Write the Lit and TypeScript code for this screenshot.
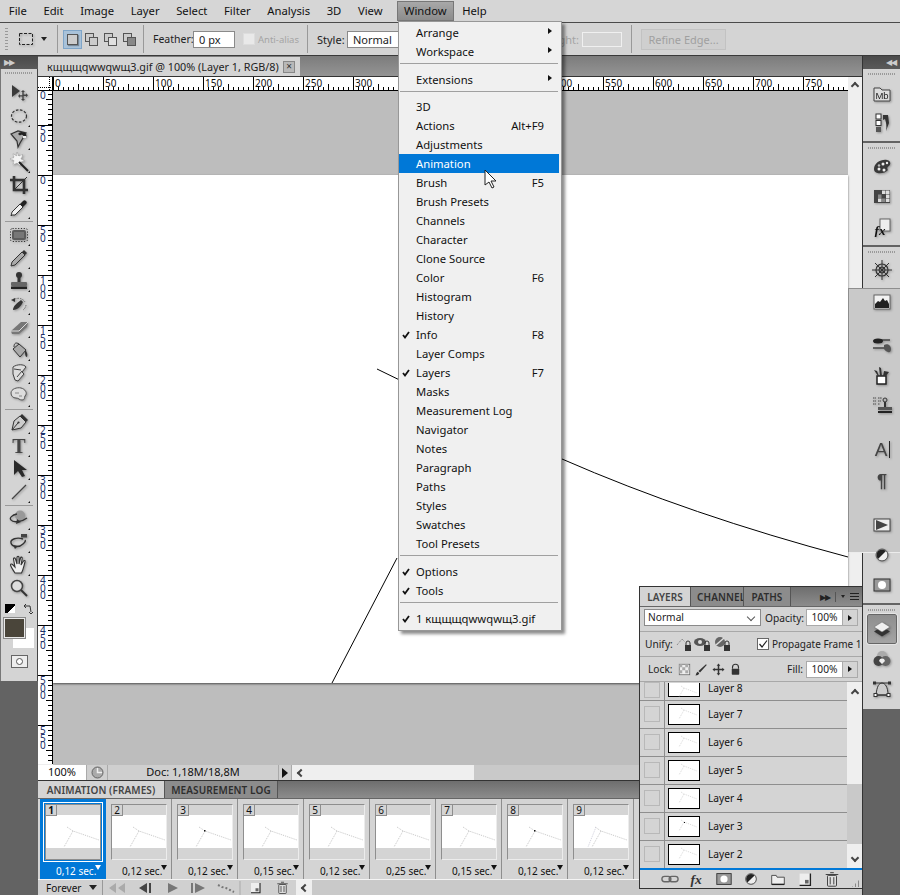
import { LitElement, html, css, svg } from "lit";
import { customElement } from "lit/decorators.js";

const ICONS: Record<string, unknown> = {
  move: svg`<path d="M3 2v12l8-6z" fill="#3a3a3a"/><path d="M14 7l2 2h-1.300v2.600H17v-1.300l2 2-2 2v-1.300h-2.300V16H16l-2 2-2-2h1.300v-2.400H11v1.300l-2-2 2-2v1.300h2.300V9H12z" fill="#444"/>`,
  marquee: svg`<ellipse cx="10" cy="10" rx="7.500" ry="6.200" fill="none" stroke="#333" stroke-width="1.200" stroke-dasharray="2.600 1.500"/>`,
  lasso: svg`<path d="M2 5l7-3 8 2-6 10-2 4-1-6z" fill="#aaa" stroke="#333" stroke-width="1.200"/><path d="M9 5a4 3 0 0 1 8 3l-2.500-.5a2 2 0 0 0-3.500-1z" fill="#222"/><rect x="14" y="7" width="3" height="2" fill="#eee"/>`,
  wand: svg`<path d="M8 0l1.500 4L14 2.500 12 7l4 2-4.500 1-.5 4-3-3-4 2 1-4.500L1 7l4-1.500L4 1.500 7.500 4z" fill="#f4f4f4" stroke="#999" stroke-width=".7" stroke-dasharray="1 .6"/><path d="M10 10l9 9" stroke="#222" stroke-width="2"/>`,
  crop: svg`<path d="M5 1v14h14" fill="none" stroke="#333" stroke-width="2.600"/><path d="M1 5h14v14" fill="none" stroke="#333" stroke-width="2.600"/><path d="M5 15 18 2" stroke="#333"/>`,
  dropper: svg`<path d="M3 17l-1 1 1-4 8-8 3 3-8 8z" fill="#f0f0f0" stroke="#333"/><path d="M11 6l3-3a2 2 0 0 1 3 3l-3 3z" fill="#222"/>`,
  heal: svg`<rect x="3" y="5" width="14" height="10" rx="2" fill="#5c5c5c"/><rect x="5" y="7" width="10" height="6" fill="#777"/><rect x="1.500" y="3.500" width="17" height="13" rx="2" fill="none" stroke="#333" stroke-dasharray="1.200 1.600"/>`,
  brush: svg`<path d="M3 14 13 4l3 3L6 17l-4 1z" fill="#aaa" stroke="#333"/><path d="M13 4l2-2 3 3-2 2z" fill="#333"/>`,
  stamp: svg`<circle cx="10" cy="4" r="3" fill="#333"/><rect x="8.500" y="6" width="3" height="6" fill="#333"/><rect x="2" y="11" width="16" height="4" rx="1" fill="#666"/><rect x="2" y="15.500" width="16" height="2.500" fill="#222"/>`,
  histbrush: svg`<path d="M4 16c0-4 4-7 8-10l2 2c-2 4-5 8-10 8z" fill="#333"/><path d="M6 5a8 8 0 0 1 10 3M17 11a7 7 0 0 1-3 5" fill="none" stroke="#666" stroke-dasharray="1.500 1"/><path d="M2 6l4-2v4z" fill="#333"/>`,
  eraser: svg`<path d="M2 14 12 5h7l-1 5-8 7H3z" fill="#777"/><path d="M2 14h8l9-9" fill="none" stroke="#ddd"/>`,
  bucket: svg`<path d="M4 9l6-5 7 6-6 7z" fill="#aaa" stroke="#333"/><path d="M10 4C7 2 5 3 5 7" fill="none" stroke="#333"/><path d="M16 10c2 2 3 4 2 7-2 0-2-3-2-7z" fill="#333"/>`,
  dodge: svg`<path d="M4 4c4-3 11-3 13 0l-4 5 2 2-6 7-3-1-2-6z" fill="#ddd" stroke="#444"/><path d="M13 8l-5 6M5 6l7 1" stroke="#444" fill="none"/>`,
  sponge: svg`<path d="M2 7c0-4 6-6 10-5s7 5 4 8c-1 2 0 4-3 4s-3-2-6-2-5-2-5-5z" fill="#ddd" stroke="#555"/><path d="M6 7h4M10 10h3" stroke="#888"/>`,
  pen: svg`<path d="M3 17 5 8l6-5 6 6-5 6z" fill="#ccc" stroke="#333"/><path d="M3 17l6-7" stroke="#333"/><circle cx="9.500" cy="9.500" r="1.100" fill="#333"/><path d="M11 3l2-2 6 6-2 2z" fill="#333"/>`,
  T: svg`<text x="10" y="17" text-anchor="middle" font-family="Liberation Serif" font-weight="700" font-size="20" fill="#444">T</text>`,
  pathsel: svg`<path d="M5 1v15l4-4 4 6 3-1-3-6h5z" fill="#2a2a2a"/>`,
  line: svg`<path d="M3 17 17 3" stroke="#444" stroke-width="1.200"/>`,
  rotate3d: svg`<circle cx="11" cy="6.500" r="5" fill="#999"/><path d="M8 5c-5 1-8 4-6 6 2 3 11 2 16-2" fill="none" stroke="#333" stroke-width="1.300"/><path d="M8 10l4 3-5 2z" fill="#333"/>`,
  orbit: svg`<path d="M14 7C8 5 1 7 2 11c1 4 8 5 12 1 2-2 3-3 2-4" fill="none" stroke="#333" stroke-width="1.400"/><path d="M4 13l5 1-3 3z" fill="#333"/><rect x="12" y="2" width="6" height="3.500" fill="#444"/>`,
  hand: svg`<path d="M6 18C4 15 2 12 1.500 10c0-1 1-1.500 2-.5L6 12 4.500 4c0-1.500 1.500-1.500 2 0L8 9V2.500c0-1.500 2-1.500 2 0V9l1.500-6c.5-1.500 2-1 1.700.5L12 10l2.500-4c1-1 2-.5 1.500 1-1 3-1.500 7-3.500 11z" fill="#eee" stroke="#333" stroke-width="1.100"/>`,
  zoom: svg`<circle cx="8" cy="8" r="5.500" fill="#ddd" stroke="#444" stroke-width="1.500"/><path d="M12 12l6 6" stroke="#333" stroke-width="2"/>`,
  mb: svg`<path d="M2 4h6l2 2h8v11H2z" fill="#ddd" stroke="#444"/><text x="10" y="15" text-anchor="middle" font-family="Liberation Sans" font-size="9.500" fill="#222">Mb</text>`,
  histdock: svg`<rect x="4" y="1" width="5" height="5" fill="#fff" stroke="#333"/><rect x="4" y="7.500" width="5" height="5" fill="#fff" stroke="#333"/><rect x="4" y="14" width="5" height="5" fill="#555"/><path d="M11 2h5l1 8-3 8c1-5 0-9-1-12l-2 1z" fill="#333"/>`,
  palette: svg`<path d="M2 12C2 6 9 2 15 3c4 1 4 4 2 6-2 1-2 3-1 4-3 4-14 5-14-1z" fill="#3a3a3a"/><circle cx="7" cy="12" r="1.500" fill="#eee"/><circle cx="11" cy="7" r="1.500" fill="#eee"/><circle cx="15" cy="6" r="1.200" fill="#eee"/><circle cx="7" cy="8.500" r="1.200" fill="#bbb"/><circle cx="12" cy="13" r="1.500" fill="#eee"/>`,
  swatches: svg`<rect x="2" y="3" width="16" height="13" fill="#444"/><path d="M10 3.500h3.500V7H10zM14 3.500h3.500V7H14zM14 7.500h3.500V11H14zM6 11.500h3.500V15H6zM14 11.500h3.500V15H14z" fill="#ddd"/><path d="M6 7.500h3.500V11H6zM10 11.500h3.500V15H10z" fill="#888"/>`,
  styles: svg`<rect x="8" y="2" width="10" height="12" fill="#eee" stroke="#666"/><text x="8" y="18" text-anchor="middle" font-family="Liberation Serif" font-style="italic" font-weight="700" font-size="13" fill="#111">fx</text>`,
  nav: svg`<circle cx="10" cy="10" r="6" fill="none" stroke="#333" stroke-width="1.200"/><circle cx="10" cy="10" r="3" fill="none" stroke="#333"/><path d="M10 0v20M0 10h20M3 3l14 14M17 3 3 17" stroke="#333"/>`,
  histogram: svg`<rect x="2" y="3" width="16" height="14" fill="#f2f2f2" stroke="#666"/><path d="M3 16V12l3-3 2 1 3-4 2 3 2-1 2 4v4z" fill="#222"/>`,
  adjust: svg`<path d="M6 4h12" stroke="#444" stroke-width="1.500"/><ellipse cx="6" cy="5" rx="5" ry="2.500" fill="#222"/><path d="M1 12h11" stroke="#444" stroke-width="1.500"/><path d="M12 9c3-2 7 0 7 4 0 2-1 4-3 3-3-1-3-2-4-3z" fill="#555"/>`,
  cup: svg`<rect x="5" y="11" width="9" height="8" fill="#fff" stroke="#222" stroke-width="1.500"/><path d="M8 11 7 2l2 1 1 8zM6 11 2 5l3 1 2 5zM11 11l1-5 5 1-3 4z" fill="#333"/>`,
  clone: svg`<path d="M1 3h3M1 6h3M1 9h3M6 3h4M6 6h3M6 9h2" stroke="#444" stroke-dasharray="1.500 .6"/><circle cx="13" cy="5" r="2" fill="none" stroke="#333"/><rect x="12" y="7" width="2" height="5" fill="#333"/><rect x="6" y="12" width="14" height="3" fill="#555"/><rect x="6" y="16" width="14" height="2" fill="#222"/>`,
  typeA: svg`<text x="9" y="17" text-anchor="middle" font-family="Liberation Sans" font-size="19" fill="#444">A</text><path d="M17.500 2v17" stroke="#222"/>`,
  para: svg`<text x="10" y="17" text-anchor="middle" font-family="Liberation Sans" font-weight="700" font-size="18" fill="#444">¶</text>`,
  play: svg`<rect x="2" y="4" width="16" height="12" fill="#eee" stroke="#444"/><path d="M4 5l12 5-12 5z" fill="#444"/>`,
  half: svg`<circle cx="10" cy="10" r="5.500" fill="#222"/><path d="M14 6a5.500 5.500 0 0 1-8 8z" fill="#eee"/><circle cx="10" cy="10" r="6" fill="none" stroke="#555"/>`,
  mask: svg`<rect x="2" y="4" width="16" height="12" fill="#999" stroke="#333"/><circle cx="10" cy="10" r="4" fill="#fff"/>`,
  layers: svg`<path d="M2 12.500l8-5 8 5-8 5z" fill="#333"/><path d="M2 8l8-5 8 5-8 5z" fill="#f0f0f0" stroke="#666" stroke-width=".5"/>`,
  channels: svg`<circle cx="10" cy="7" r="5" fill="#aaa"/><circle cx="6.500" cy="12" r="5" fill="#444"/><circle cx="13.500" cy="12" r="5" fill="#666"/><path d="M8 10a5 5 0 0 1 4 0l1 2-3 3-3-3z" fill="#eee"/>`,
  paths: svg`<path d="M4 16C5 7 7 4 10 4s6 4 6 12z" fill="#ccc" stroke="#333"/><path d="M4 16h12M3 4h14" stroke="#333"/><rect x="2" y="14.500" width="3" height="3" fill="#fff" stroke="#333"/><rect x="15" y="14.500" width="3" height="3" fill="#fff" stroke="#333"/><rect x="1" y="2.500" width="3" height="3" fill="#333"/><rect x="16" y="2.500" width="3" height="3" fill="#333"/>`,
  trash: svg`<rect x="5" y="6" width="10" height="12" rx="1" fill="#ddd" stroke="#333"/><path d="M3 5h14M8 3h4M8 8v8M12 8v8" stroke="#333"/>`,
  newdoc: svg`<rect x="4" y="4" width="12" height="13" fill="#eee"/><path d="M4 17h12V4" fill="none" stroke="#222" stroke-width="1.500"/><rect x="10" y="11" width="4" height="4" fill="#666"/>`,
  folder: svg`<path d="M3 6h5l1 2h8v8H3z" fill="#eee" stroke="#444"/><path d="M3 16h14" stroke="#222" stroke-width="1.500"/>`,
  link: svg`<rect x="1" y="7" width="10" height="6" rx="3" fill="none" stroke="#666" stroke-width="1.500"/><rect x="9" y="7" width="10" height="6" rx="3" fill="none" stroke="#666" stroke-width="1.500"/>`,
  fx: svg`<text x="9" y="15" text-anchor="middle" font-family="Liberation Serif" font-style="italic" font-weight="700" font-size="15" fill="#333">fx</text>`,
  checker: svg`<rect x="3" y="3" width="14" height="14" fill="#eee" stroke="#666"/><path d="M3 3h4v4H3zM11 3h4v4h-4zM7 7h4v4H7zM15 7h2v4h-2zM3 11h4v4H3zM11 11h4v4h-4z" fill="#aaa"/>`,
  paint: svg`<path d="M2 18c3 0 4-1 5-3l-2-2c-2 1-2 3-3 5zM6 12l10-9 1 1-9 10z" fill="#333"/>`,
  arrows: svg`<path d="M10 2l2.500 3H11v4h4V7.500l3 2.500-3 2.500V11h-4v4h1.500L10 18l-2.500-3H9v-4H5v1.500L2 10l3-2.500V9h4V5H7.500z" fill="#333"/>`,
  lock: svg`<path d="M6 9V7a4 4 0 0 1 8 0v2" fill="none" stroke="#333" stroke-width="1.500"/><rect x="5" y="9" width="10" height="8" rx="1" fill="#333"/>`,
};

const ic = (name: string, size = 20) =>
  html`<svg class="ic" viewBox="0 0 20 20" width=${size} height=${size}>${ICONS[name]}</svg>`;

const MENUBAR = ["File", "Edit", "Image", "Layer", "Select", "Filter", "Analysis", "3D", "View", "Window", "Help"];

type MenuRow = { t?: string; k?: string; sub?: boolean; on?: boolean; hi?: boolean; sep?: number };
const WINDOW_MENU: MenuRow[] = [
  { t: "Arrange", sub: true },
  { t: "Workspace", sub: true },
  { sep: 9 },
  { t: "Extensions", sub: true },
  { sep: 8 },
  { t: "3D" },
  { t: "Actions", k: "Alt+F9" },
  { t: "Adjustments" },
  { t: "Animation", hi: true },
  { t: "Brush", k: "F5" },
  { t: "Brush Presets" },
  { t: "Channels" },
  { t: "Character" },
  { t: "Clone Source" },
  { t: "Color", k: "F6" },
  { t: "Histogram" },
  { t: "History" },
  { t: "Info", k: "F8", on: true },
  { t: "Layer Comps" },
  { t: "Layers", k: "F7", on: true },
  { t: "Masks" },
  { t: "Measurement Log" },
  { t: "Navigator" },
  { t: "Notes" },
  { t: "Paragraph" },
  { t: "Paths" },
  { t: "Styles" },
  { t: "Swatches" },
  { t: "Tool Presets" },
  { sep: 9 },
  { t: "Options", on: true },
  { t: "Tools", on: true },
  { sep: 9 },
  { t: "1 кщщщqwwqwщ3.gif", on: true },
];

// null = separator between tool groups
const TOOLS: (string | null)[] = [
  "move", "marquee", "lasso", "wand", "crop", "dropper", null,
  "heal", "brush", "stamp", "histbrush", "eraser", "bucket", "dodge", "sponge", null,
  "pen", "T", "pathsel", "line", null,
  "rotate3d", "orbit", "hand", "zoom",
];
const NO_FLYOUT = ["move", "crop", "zoom"];

// icons, group height, row pitch, space above the first row
const DOCK: [string[], number, number, number][] = [
  [["mb", "histdock"], 72, 29, 4],
  [["palette", "swatches", "styles"], 102, 30, 3],
  [["nav", "histogram"], 73, 32, 1],
  [["adjust", "cup", "clone"], 102, 29.5, 3],
  [["typeA", "para"], 73, 31, 1],
  [["play", "half", "mask"], 102, 30, 3],
  [["layers", "channels", "paths"], 104, 30, 3],
];

const V_LABELS = ["0", "50", "0", "50", "100", "150", "200", "250", "300", "350", "400", "450", "500", "550"];
const FRAMES = ["0,12", "0,12", "0,12", "0,15", "0,12", "0,25", "0,15", "0,12", "0,12", "0,12"];
const LAYERS = [8, 7, 6, 5, 4, 3, 2];

@customElement("app-root")
export class AppRoot extends LitElement {
  static styles = css`
    :host {
      display: block;
      width: 900px;
      height: 895px;
      font-family: "Noto Sans", sans-serif;
      font-size: 11px;
      color: #111;
    }
    * { box-sizing: border-box; }
    .app {
      position: relative;
      width: 900px;
      height: 895px;
      overflow: hidden;
      background: #636363;
      display: flex;
      flex-direction: column;
    }
    .ic { display: block; flex: none; }
    .shadow { filter: drop-shadow(1px 1px 1px rgba(0,0,0,.3)); }

    /* menu bar */
    .menubar {
      height: 22px;
      background: #d6d6d6;
      display: flex;
      align-items: center;
      padding-left: 0.5px;
      font-size: 11.25px;
      flex: none;
    }
    .menubar span { padding: 0 8.3px; height: 20px; line-height: 20px; }
    .menubar span.open {
      background: linear-gradient(#a8a8a8, #8c8c8c);
      border: 1px solid #777;
      line-height: 18px;
      padding: 0;
      margin-left: 6px;
      width: 57px;
      text-align: center;
    }

    /* options bar */
    .options {
      height: 34px;
      flex: none;
      background: #d4d4d4;
      border-top: 1px solid #4a4a4a;
      border-bottom: 1px solid #3a3a3a;
      display: flex;
      align-items: center;
      padding-left: 5px;
      color: #222;
    }
    .grip-v {
      width: 3px;
      height: 22px;
      background: repeating-linear-gradient(#999 0 1px, transparent 1px 3px);
      margin-right: 10px;
    }
    .vsep { width: 1px; height: 28px; background: #999; flex: none; }
    .mode { width: 19px; height: 19px; display: flex; align-items: center; justify-content: center; }
    .mode.active { background: #a9c2d9; border: 1px solid #7fa5c8; }
    .mode i { display: block; width: 11px; height: 11px; background: #ccc; border: 1px solid #555; box-shadow: 1px 1px 1px rgba(0,0,0,.3); }
    .mode i.b { box-shadow: -4px -4px 0 -1px #ccc, -4px -4px 0 0 #555; margin: 4px 0 0 4px; width: 9px; height: 9px; }
    .mode i.c { background: #888; }
    .input { background: #fff; border: 1px solid #8a8a8a; height: 17px; line-height: 15px; padding-left: 5px; flex: none; }
    .disabled { color: #a4a4a4; }
    .tri { width: 0; height: 0; border: 3.5px solid transparent; border-top: 4px solid #222; border-bottom: 0; flex: none; }
    .refine {
      width: 85px; height: 21px; margin-left: 9px; line-height: 19px; text-align: center;
      border: 1px solid #c2c2c2; background: #cfcfcf; color: #a0a0a0;
    }
    .lbl { flex: none; white-space: nowrap; }

    .main { flex: 1; display: flex; min-height: 0; }

    /* left tools */
    .toolcol { width: 38px; flex: none; display: flex; flex-direction: column; }
    .colhead {
      height: 13px; flex: none; background: linear-gradient(#4a4a4a, #5a5a5a);
      color: #ccc; font-size: 8px; line-height: 12px; padding: 0 4px; letter-spacing: -1px;
    }
    .tools {
      height: 612px; background: #d4d4d4; border-left: 1px solid #777; border-right: 1px solid #444;
      display: flex; flex-direction: column; align-items: center;
    }
    .grip-h {
      height: 2px; width: 28px; flex: none;
      background: repeating-linear-gradient(90deg, #9a9a9a 0 1px, transparent 1px 2px);
    }
    .tools .grip-h { margin: 3px 0 7px; }
    .tool { position: relative; width: 36px; height: 23px; flex: none; display: flex; align-items: center; justify-content: center; }
    .tool.fly::after {
      content: ""; position: absolute; left: 27px; bottom: 0;
      border: 1.5px solid transparent; border-right-color: #111; border-bottom-color: #111;
    }
    .toolsep { width: 28px; height: 1px; background: #9a9a9a; margin: 2px 0 1px; flex: none; }
    .mini { display: flex; width: 28px; justify-content: space-between; margin-top: 5px; height: 10px; flex: none; }
    .defcol { width: 10px; height: 9px; background: linear-gradient(135deg, #000 0 60%, #fff 60%); }
    .swatches { position: relative; width: 30px; height: 31px; margin-top: 4px; flex: none; }
    .fg, .bg { position: absolute; width: 21px; height: 20px; }
    .fg { left: 0; top: 0; background: #4a453a; border: 1px solid #e8e8e8; outline: 1px solid #888; z-index: 1; }
    .bg { left: 9px; top: 10px; background: #fff; }
    .quick { width: 17px; height: 13px; margin-top: 6px; background: #eee; border: 1px solid #666; display: flex; align-items: center; justify-content: center; flex: none; }
    .quick i { width: 7px; height: 7px; border-radius: 50%; background: #fff; border: 1px solid #555; }

    /* document */
    .doc { flex: 1; min-width: 0; display: flex; flex-direction: column; }
    .tabs { height: 20px; flex: none; background: linear-gradient(#7c7c7c, #949494); display: flex; align-items: flex-end; }
    .doctab {
      width: 262px; height: 19px; background: #d4d4d4; padding-left: 9px;
      display: flex; align-items: center; font-size: 10.8px; color: #222; white-space: nowrap;
    }
    .close { width: 12px; height: 12px; margin-left: auto; margin-right: 5px; background: #b8b8b8; border: 1px solid #888; font-size: 10px; line-height: 9px; text-align: center; color: #333; flex: none; }
    .hrow { height: 15px; flex: none; display: flex; background: #fff; border-top: 1px solid #333; }
    .corner {
      width: 15px; flex: none; border-right: 1px solid #000; border-bottom: 1px solid #000;
      background:
        repeating-linear-gradient(#000 0 1px, transparent 1px 2px) 11px 0 / 1px 100% no-repeat,
        repeating-linear-gradient(90deg, #000 0 1px, transparent 1px 2px) 0 10px / 100% 1px no-repeat;
    }
    .hruler { flex: 1; min-width: 0; display: flex; }
    .hseg {
      width: 50px; flex: none; border-left: 1px solid #000; border-bottom: 1px solid #000;
      font-size: 10px; line-height: 12px; padding-left: 1px; color: #111;
      background:
        linear-gradient(90deg, transparent 24px, #000 24px 25px, transparent 25px) 0 100% / 50px 6px no-repeat,
        repeating-linear-gradient(90deg, transparent 0 4px, #000 4px 5px) 0 100% / 50px 3px no-repeat;
    }
    .hseg:last-child { width: 45px; }
    .hfill { width: 14px; flex: none; background: #efefef; display: flex; justify-content: center; padding-top: 6px; }
    .docbody { flex: 1; min-height: 0; display: flex; }
    .vruler { width: 15px; flex: none; background: #fff; border-right: 1px solid #000; }
    .vseg {
      height: 50px; border-top: 1px solid #000; padding: 1px 0 0 2px;
      font-size: 10px; line-height: 7.5px; color: #1a2f6a; white-space: pre-line;
      background:
        linear-gradient(transparent 24px, #000 24px 25px, transparent 25px) 100% 0 / 6px 50px no-repeat,
        repeating-linear-gradient(transparent 0 4px, #000 4px 5px) 100% 0 / 4px 50px no-repeat;
    }
    .vseg.first { height: 34px; border-top: 0; background-position: 100% -16px; }
    .vseg:last-child { height: 40px; }
    .canvas { position: relative; flex: 1; display: flex; flex-direction: column; background: #bdbdbd; }
    .gray { background: #bdbdbd; flex: none; }
    .page { height: 508px; flex: none; background: #fff; box-shadow: 0 1px 2px rgba(0,0,0,.6); z-index: 0; }
    .strokes { position: absolute; left: 0; top: 0; z-index: 1; }
    .vscroll { width: 14px; flex: none; background: #efefef; display: flex; flex-direction: column; }
    .vscroll .up { height: 197px; flex: none; }
    .vscroll .thumb { height: 265px; flex: none; background: #c9c9c9; }
    .chev { width: 6px; height: 6px; border-left: 2px solid #444; border-top: 2px solid #444; transform: rotate(45deg); display: block; flex: none; }
    .chev.l { transform: rotate(-45deg); }
    .chev.d { transform: rotate(225deg); }

    .status { height: 16px; flex: none; display: flex; background: #cfcfcf; border-top: 1px solid #eee; }
    .zoomval { width: 48px; background: #fff; text-align: center; line-height: 14px; font-size: 11px; }
    .statusicon { width: 22px; display: flex; align-items: center; justify-content: center; border-right: 1px solid #aaa; border-left: 1px solid #aaa; }
    .doctext { width: 170px; text-align: center; line-height: 14px; }
    .playbtn { width: 14px; display: flex; align-items: center; justify-content: center; border-left: 1px solid #aaa; border-right: 1px solid #aaa; }
    .rtri { border: 5px solid transparent; border-left: 6px solid #111; border-right: 0; }
    .rtri.s { border-width: 3px 0 3px 4px; }
    .hscroll { flex: 1; display: flex; min-width: 0; background: #c9c9c9; }
    .hscroll .track { flex: none; background: #efefef; display: flex; align-items: center; padding-left: 6px; }

    /* animation panel */
    .anim { height: 115px; flex: none; display: flex; flex-direction: column; background: #d0d0d0; border-top: 1px solid #333; }
    .animtabs { height: 18px; flex: none; display: flex; background: linear-gradient(#6e6e6e, #8c8c8c); border-bottom: 1px solid #666; }
    .ptab { font-size: 10px; font-weight: 600; letter-spacing: .1px; white-space: nowrap; line-height: 18px; text-align: center; flex: none; }
    .ptab.on { background: #d4d4d4; color: #444; }
    .ptab.off { background: #8c8c8c; color: #2e2e2e; border-right: 1px solid #555; border-left: 1px solid #555; }
    .frames { height: 81px; flex: none; display: flex; padding-left: 2px; border-bottom: 1px solid #f4f4f4; background: #d4d4d4; }
    .frame { width: 66px; flex: none; border-right: 1px solid #8e8e8e; padding: 5px 0 0 5px; position: relative; color: #111; }
    .frame.sel { background: #0078d7; color: #fff; border-right: 0; }
    .thumb {
      position: relative; width: 56px; height: 56px; background: #d4d4d4;
      border: 1px solid; border-color: #8e8e8e #ececec #ececec #8e8e8e;
    }
    .frame.sel .thumb { outline: 1px solid #fff; outline-offset: 1px; border-color: #8e8e8e; }
    .thumb .white { position: absolute; left: 0; right: 0; top: 10px; height: 33px; background: #fff; }
    .thumb svg { position: absolute; left: 0; top: 0; }
    .num {
      position: absolute; left: 0; top: 0; width: 11px; height: 11px; background: #d4d4d4;
      border-right: 1px solid #8e8e8e; border-bottom: 1px solid #8e8e8e;
      font-size: 10px; line-height: 10px; text-align: center; color: #111;
    }
    .frame.sel .num { font-weight: 700; }
    .time { position: absolute; left: 16px; top: 65px; font-size: 10px; line-height: 14px; white-space: nowrap; }
    .dtri { position: absolute; left: 55px; top: 66px; border: 3px solid transparent; border-top: 5px solid currentColor; border-bottom: 0; }
    .ctrls { flex: 1; display: flex; align-items: center; background: #d0d0d0; position: relative; }
    .forever { width: 44px; margin-left: 8px; flex: none; font-size: 10px; }
    .cbtn { display: block; flex: none; }

    /* dock */
    .dock { width: 38px; flex: none; display: flex; flex-direction: column; border-left: 1px solid #333; }
    .dock .colhead { text-align: right; height: 13px; }
    .dockgroup {
      background: #d4d4d4; flex: none; display: flex; flex-direction: column; align-items: center;
      margin-bottom: 2px; padding-top: 4px;
    }
    .dockbtn { width: 30px; display: flex; align-items: center; justify-content: center; flex: none; }
    .dockbtn.active { background: linear-gradient(#8e8e8e, #a4a4a4); border: 1px solid #666; outline: 1px solid #e4e4e4; border-radius: 2px; height: 28px; }

    /* floating window menu */
    .winmenu {
      position: absolute; left: 398px; top: 21px; width: 164px; height: 610px;
      background: #f0f0f0; border: 1px solid #979797; padding-top: 1px; font-size: 11.25px; color: #111;
      box-shadow: 3px 3px 3px rgba(0,0,0,.45); z-index: 5;
    }
    .mi { height: 19px; line-height: 19px; padding-left: 17px; position: relative; white-space: nowrap; width: 160px; }
    .mi.hi { background: #0078d7; color: #fff; }
    .mi .k { position: absolute; right: 15px; top: 0; }
    .mi .sub { position: absolute; left: 149px; top: 5px; border: 3.5px solid transparent; border-left: 4px solid #111; border-right: 0; }
    .mi svg { position: absolute; left: 3px; top: 6px; }
    .ms { position: relative; }
    .ms::after { content: ""; position: absolute; left: 1px; right: 3px; top: 2px; height: 1px; background: #a0a0a0; }

    /* floating layers panel */
    .layers {
      position: absolute; left: 639px; top: 586px; width: 224px; height: 303px;
      background: #d4d4d4; border: 1px solid #333; display: flex; flex-direction: column; z-index: 3;
      font-size: 10.2px;
    }
    .ltabs { height: 20px; flex: none; display: flex; background: linear-gradient(#6e6e6e, #8c8c8c); border-bottom: 1px solid #666; }
    .ltabs .ptab { line-height: 20px; overflow: hidden; }
    .lmenu { margin-left: auto; margin-right: 3px; display: flex; align-items: center; gap: 5px; color: #222; }
    .lmenu .bars { width: 9px; height: 7px; background: repeating-linear-gradient(#222 0 1px, transparent 1px 3px); }
    .lrow { display: flex; align-items: center; padding: 0 4px; flex: none; color: #222; height: 25px; white-space: nowrap; }
    .lrow + .lrow { border-top: 1px solid #a8a8a8; }
    .lrow.blend { height: 24px; padding-bottom: 3px; }
    .lsel {
      width: 117px; height: 17px; background: #fff; border: 1px solid #8a8a8a; padding-left: 3px; line-height: 15px;
      position: relative; flex: none;
    }
    .lsel::after { content: ""; position: absolute; right: 6px; top: 4px; width: 5px; height: 5px; border-right: 1px solid #555; border-bottom: 1px solid #555; transform: rotate(45deg); }
    .stepper { display: flex; flex: none; height: 17px; width: 52px; margin-left: auto; border: 1px solid #aaa; }
    .stepper .v { flex: 1; background: #fff; text-align: center; line-height: 15px; }
    .stepper .b { width: 15px; background: #d4d4d4; border-left: 1px solid #aaa; display: flex; align-items: center; justify-content: center; }
    .chk { width: 12px; height: 12px; background: #fff; border: 1px solid #666; flex: none; display: flex; align-items: center; justify-content: center; }
    .list { flex: 1; min-height: 0; display: flex; border-top: 1px solid #a8a8a8; }
    .rows { flex: 1; min-width: 0; overflow: hidden; background: #d4d4d4; }
    .lyr { height: 28px; display: flex; align-items: center; border-bottom: 1px solid #8e8e8e; }
    .lyr.cut { height: 19px; align-items: flex-end; }
    .lyr .eye { width: 25px; height: 100%; flex: none; border-right: 1px solid #8e8e8e; padding: 5px 4px; }
    .lyr .eye i { display: block; width: 16px; height: 16px; border: 1px solid #b8b8b8; }
    .lyr.cut .eye { padding-top: 0; }
    .lyr .th { width: 32px; height: 21px; margin: 0 0 1px 3px; background: #fff; border: 1px solid #000; flex: none; }
    .lyr.cut .th { height: 14px; margin-bottom: 3px; border-top: 0; }
    .lyr .th svg { display: block; }
    .lyr .nm { margin: 0 0 2px 8px; }
    .lyr.cut .nm { margin-bottom: 5px; }
    .lscroll { width: 15px; flex: none; background: #efefef; display: flex; flex-direction: column; align-items: center; }
    .lfoot { height: 20px; flex: none; display: flex; align-items: center; border-top: 2px solid #0078d7; padding-left: 16px; position: relative; }
    .lfoot span.cell { width: 27px; flex: none; display: flex; justify-content: center; }
    .resize {
      position: absolute; right: 1px; bottom: 1px; width: 9px; height: 9px;
      background: repeating-linear-gradient(90deg, #888 0 1px, transparent 1px 3px);
      clip-path: polygon(100% 0, 100% 100%, 0 100%);
    }
    .cursor { position: absolute; left: 484px; top: 169px; z-index: 6; }
  `;

  renderTools() {
    return TOOLS.map((t) =>
      t === null
        ? html`<div class="toolsep"></div>`
        : html`<div class="tool ${NO_FLYOUT.includes(t) ? "" : "fly"}"><span class="shadow">${ic(t)}</span></div>`,
    );
  }

  renderDock() {
    return DOCK.map(
      ([icons, height, pitch, lead]) => html`<div class="dockgroup" style="height:${height}px">
        <div class="grip-h" style="margin-bottom:${lead}px"></div>
        ${icons.map(
          (n) => html`<div class="dockbtn ${n === "layers" ? "active" : ""}" style="height:${pitch}px">
            <span class="shadow">${ic(n)}</span>
          </div>`,
        )}
      </div>`,
    );
  }

  renderFrame(time: string, i: number) {
    const dot = i === 2 || i === 7;
    return html`<div class="frame ${i === 0 ? "sel" : ""}">
      <div class="thumb">
        <div class="white"></div>
        <svg width="54" height="54" viewBox="0 0 54 54">
          <path d="M21 22l6 4 26 9M27 26l-9 16" fill="none" stroke="#c6c6c6" stroke-dasharray="1 1"/>
          ${dot ? svg`<rect x="26" y="25" width="1.500" height="1.500" fill="#111"/>` : ""}
          ${i === 8 ? svg`<path d="M22 22l-8 20" fill="none" stroke="#d0d0dc" stroke-dasharray="1 1"/>` : ""}
        </svg>
        <div class="num">${i + 1}</div>
      </div>
      <span class="time">${time} sec.</span>
      <span class="dtri"></span>
    </div>`;
  }

  renderLayerRow(n: number, i: number) {
    return html`<div class="lyr ${i === 0 ? "cut" : ""}">
      <div class="eye"><i></i></div>
      <div class="th">
        <svg width="30" height="19" viewBox="0 0 30 19">
          <path d="M12 3l3 2 13 5M15 5l-5 9" fill="none" stroke="#dadada" stroke-dasharray="1 1"/>
          ${n === 3 ? svg`<rect x="15" y="5" width="1" height="1" fill="#111"/>` : ""}
        </svg>
      </div>
      <span class="nm">Layer ${n}</span>
    </div>`;
  }

  renderMenu() {
    return html`<div class="winmenu">
      ${WINDOW_MENU.map((m) =>
        m.sep
          ? html`<div class="ms" style="height:${m.sep}px"></div>`
          : html`<div class="mi ${m.hi ? "hi" : ""}">
              ${m.on
                ? html`<svg width="8" height="8" viewBox="0 0 8 8"><path d="M1 4l2 2.500L7 1" fill="none" stroke="#111" stroke-width="1.800"/></svg>`
                : ""}
              ${m.t}
              ${m.k ? html`<span class="k">${m.k}</span>` : ""}
              ${m.sub ? html`<span class="sub"></span>` : ""}
            </div>`,
      )}
    </div>`;
  }

  renderLayers() {
    return html`<div class="layers">
      <div class="ltabs">
        <div class="ptab on" style="width:50px">LAYERS</div>
        <div class="ptab off" style="width:54px;text-align:left;padding-left:6px">CHANNELS</div>
        <div class="ptab off" style="width:47px;border-left:0">PATHS</div>
        <div class="lmenu">
          <span style="font-size:8px;letter-spacing:-1px">▶▶</span>
          <span style="width:1px;height:10px;background:#555"></span>
          <span class="tri" style="border-width:2px;border-top-width:3px"></span>
          <span class="bars"></span>
        </div>
      </div>
      <div class="lrow blend">
        <div class="lsel">Normal</div>
        <span style="margin-left:4px">Opacity:</span>
        <div class="stepper"><div class="v">100%</div><div class="b"><span class="rtri s"></span></div></div>
      </div>
      <div class="lrow" style="padding-left:5px">
        Unify:
        <span style="margin-left:3px;display:flex;gap:1px">
          <svg width="16" height="16" viewBox="0 0 16 16"><path d="M1 9l5-6 3 3" fill="none" stroke="#777" stroke-dasharray="1 1"/><rect x="9" y="9" width="6" height="6" fill="#333"/><path d="M10 9V7a2 2 0 0 1 4 0v2" fill="none" stroke="#333"/></svg>
          <svg width="20" height="16" viewBox="0 0 20 16"><ellipse cx="7" cy="6" rx="6" ry="4" fill="#555"/><circle cx="7" cy="6" r="2" fill="#ddd"/><rect x="11" y="9" width="6" height="6" fill="#333"/><path d="M12 9V7a2 2 0 0 1 4 0v2" fill="none" stroke="#333"/></svg>
          <svg width="18" height="16" viewBox="0 0 18 16"><circle cx="6" cy="6" r="5" fill="#666"/><path d="M2 9l8-7" stroke="#ddd" stroke-width="1.500"/><rect x="10" y="9" width="6" height="6" fill="#333"/><path d="M11 9V7a2 2 0 0 1 4 0v2" fill="none" stroke="#333"/></svg>
        </span>
        <span class="chk" style="margin-left:auto">
          <svg width="10" height="10" viewBox="0 0 10 10"><path d="M1.500 5l2.500 3L9 1.500" fill="none" stroke="#222" stroke-width="1.200"/></svg>
        </span>
        <span style="margin-left:3px;font-size:10px;width:86px;flex:none">Propagate Frame 1</span>
      </div>
      <div class="lrow" style="padding-left:8px">
        Lock:
        <span style="margin-left:4px;display:flex;gap:2px">${ic("checker", 15)}${ic("paint", 15)}${ic("arrows", 15)}${ic("lock", 15)}</span>
        <span style="margin-left:auto;margin-right:3px">Fill:</span>
        <div class="stepper" style="margin-left:0"><div class="v">100%</div><div class="b"><span class="rtri s"></span></div></div>
      </div>
      <div class="list">
        <div class="rows">${LAYERS.map((n, i) => this.renderLayerRow(n, i))}</div>
        <div class="lscroll">
          <span class="chev" style="margin-top:8px"></span>
          <span style="flex:none;height:88px"></span>
          <span style="flex:none;height:60px;width:15px;background:#c9c9c9"></span>
          <span class="chev d" style="margin-top:11px"></span>
        </div>
      </div>
      <div class="lfoot">
        ${["link", "fx", "mask", "half", "folder", "newdoc", "trash"].map(
          (n) => html`<span class="cell">${ic(n, 18)}</span>`,
        )}
        <span class="resize"></span>
      </div>
    </div>`;
  }

  render() {
    const hlabels = Array.from({ length: 16 }, (_, i) => i * 50);
    return html`<div class="app">
      <div class="menubar">
        ${MENUBAR.map((m) => html`<span class=${m === "Window" ? "open" : ""}>${m}</span>`)}
      </div>

      <div class="options">
        <div class="grip-v"></div>
        <span class="shadow"><svg class="ic" width="16" height="16" viewBox="0 0 16 16"><rect x="1.500" y="2.500" width="13" height="11" fill="none" stroke="#222" stroke-dasharray="3 1.500"/></svg></span>
        <span class="tri" style="margin:0 10px 0 7px"></span>
        <div class="vsep"></div>
        <span class="mode active" style="margin-left:5px"><i></i></span>
        <span class="mode"><i class="b"></i></span>
        <span class="mode"><i class="b" style="background:#e0e0e0"></i></span>
        <span class="mode"><i class="b c"></i></span>
        <div class="vsep" style="margin-left:4px"></div>
        <span class="lbl" style="margin-left:9px;width:40px;font-size:10.5px">Feather:</span>
        <div class="input" style="width:42px">0 px</div>
        <span style="width:12px;height:12px;background:#e9e9e9;border:1px solid #ddd;margin-left:8px;flex:none"></span>
        <span class="lbl disabled" style="margin-left:3px;width:40px;font-size:9.5px">Anti-alias</span>
        <div class="vsep" style="margin-left:9px"></div>
        <span class="lbl" style="margin-left:9px;width:30px">Style:</span>
        <div class="input" style="width:100px">Normal</div>
        <span class="lbl disabled" style="width:132px;text-align:right">Height:</span>
        <div class="input" style="width:40px;margin-left:3px;background:#d4d4d4;border-color:#f0f0f0;height:15px"></div>
        <div class="vsep" style="margin-left:9px"></div>
        <div class="refine">Refine Edge...</div>
      </div>

      <div class="main">
        <aside class="toolcol">
          <div class="colhead">▶▶</div>
          <div class="tools">
            <div class="grip-h"></div>
            ${this.renderTools()}
            <div class="mini"><span class="defcol"></span>
              <svg width="10" height="10" viewBox="0 0 10 10"><path d="M1 2h6l1 6M6 8l2 2 2-2M3 0 1 2l2 2" fill="none" stroke="#333"/></svg>
            </div>
            <div class="swatches"><div class="fg"></div><div class="bg"></div></div>
            <div class="quick"><i></i></div>
          </div>
        </aside>

        <section class="doc">
          <div class="tabs">
            <div class="doctab">кщщщqwwqwщ3.gif @ 100% (Layer 1, RGB/8)<span class="close">×</span></div>
          </div>
          <div class="hrow">
            <div class="corner"></div>
            <div class="hruler">${hlabels.map((n) => html`<div class="hseg">${n}</div>`)}</div>
            <div class="hfill"><span class="chev"></span></div>
          </div>
          <div class="docbody">
            <div class="vruler">
              ${V_LABELS.map(
                (l, i) => html`<div class="vseg ${i === 0 ? "first" : ""}">${l.split("").join("\n")}</div>`,
              )}
            </div>
            <div class="canvas">
              <div class="gray" style="height:84px"></div>
              <div class="page"></div>
              <div class="gray" style="height:82px"></div>
              <svg class="strokes" width="795" height="674" viewBox="53 91 795 674">
                <path d="M377 369 562 459Q690 515 848 557M397 558 332 683" fill="none" stroke="#000"/>
              </svg>
            </div>
            <div class="vscroll">
              <div class="up"></div>
              <div class="thumb"></div>
            </div>
          </div>
          <div class="status">
            <div class="zoomval">100%</div>
            <div class="statusicon">
              <svg width="13" height="13" viewBox="0 0 13 13"><circle cx="6.500" cy="6.500" r="5.500" fill="#aaa" stroke="#666"/><path d="M6.500 2v4.500H11" fill="none" stroke="#f0f0f0" stroke-width="1.500"/></svg>
            </div>
            <div class="doctext">Doc: 1,18M/18,8M</div>
            <div class="playbtn"><span class="rtri"></span></div>
            <div class="hscroll">
              <div class="track" style="width:182px"><span class="chev l"></span></div>
            </div>
          </div>
          <div class="anim">
            <div class="animtabs">
              <div class="ptab on" style="width:126px">ANIMATION (FRAMES)</div>
              <div class="ptab off" style="width:114px">MEASUREMENT LOG</div>
            </div>
            <div class="frames">${FRAMES.map((t, i) => this.renderFrame(t, i))}</div>
            <div class="ctrls">
              <span class="forever">Forever</span>
              <span class="tri" style="margin-left:-1px;border-width:4px;border-top-width:5px"></span>
              <span class="vsep" style="height:15px;margin-left:5px"></span>
              <svg class="cbtn" width="138" height="14" viewBox="0 0 138 14">
                <path d="M13 2v10L6 7zM22 2v10l-7-5z" fill="#aaa"/>
                <path d="M44 2v10l-8-5zM46 2h2v10h-2z" fill="#444"/>
                <path d="M65 2l10 5-10 5z" fill="#777"/>
                <path d="M88 2h2v10h-2zM92 2l10 5-10 5z" fill="#777"/>
                <path d="M115 4l4 2 4 1 4 2 4 2" fill="none" stroke="#777" stroke-width="2" stroke-dasharray="2 2"/>
                <path d="M137 0v14" stroke="#aaa"/>
              </svg>
              <span style="margin-left:7px">${ic("newdoc", 15)}</span>
              <span style="margin:0 6px 0 12px">${ic("trash", 15)}</span>
              <div class="hscroll" style="height:15px">
                <div class="track" style="width:16px"><span class="chev l"></span></div>
              </div>
            </div>
          </div>
        </section>

        <aside class="dock">
          <div class="colhead">◀◀</div>
          ${this.renderDock()}
        </aside>
      </div>

      ${this.renderMenu()} ${this.renderLayers()}

      <svg class="cursor" width="14" height="20" viewBox="0 0 14 20">
        <path d="M1 1v15l4-3 3 6 2-1-3-6h5z" fill="#fff" stroke="#222"/>
      </svg>
    </div>`;
  }
}
